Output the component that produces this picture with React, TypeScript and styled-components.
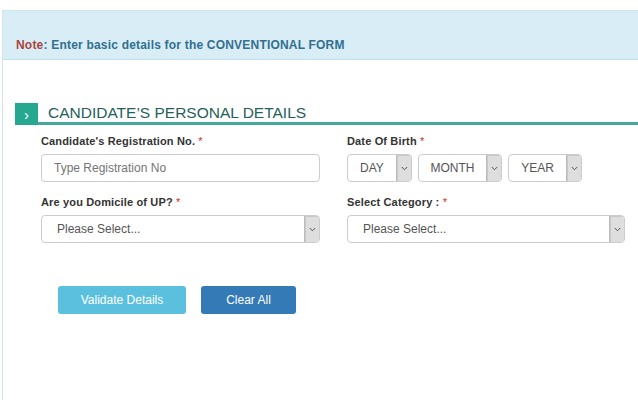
import React from "react";
import styled, { createGlobalStyle } from "styled-components";

const GlobalStyle = createGlobalStyle`
    body{
        margin:0;
        background:#fff;
        font-family:"Liberation Sans", Arial, sans-serif;
    }
`;

const Page = styled.div`
    padding:10px 0 0 2px;
`;

const Frame = styled.div`
    border-left:1px solid #d3e3ec;
    border-top:1px solid #cfe4ef;
    min-height:389px;
`;

const Alert = styled.div`
    background:#d9edf7;
    border-bottom:1px solid #bfe1ec;
    height:49px;
    box-sizing:border-box;
    padding:0 0 7px 13px;
    display:flex;
    align-items:flex-end;
    font-size:12px;
    font-weight:bold;
    letter-spacing:0.2px;
    color:#31708f;
    span{
        color:#a94442;
    }
`;

const Section = styled.div`
    margin-top:43px;
    padding-left:12px;
`;

const HeadingRow = styled.div`
    display:flex;
    align-items:stretch;
    height:22px;
`;

const HeadingBadge = styled.div`
    width:23px;
    background:#26a890;
    color:#fff;
    display:flex;
    align-items:center;
    justify-content:center;
    font-size:15px;
`;

const HeadingTitle = styled.div`
    flex:1;
    border-bottom:3px solid #44a79c;
    padding-left:10px;
    font-size:15.5px;
    color:#255f5c;
    line-height:20px;
`;

const FormGrid = styled.div`
    margin:10px 0 0 26px;
    display:grid;
    grid-template-columns:279px 278px;
    column-gap:27px;
    row-gap:14px;
`;

const Field = styled.div`
    display:flex;
    flex-direction:column;
`;

const Label = styled.label`
    font-size:11px;
    font-weight:bold;
    letter-spacing:0.15px;
    color:#333;
    line-height:13px;
    margin-bottom:6px;
    span{
        color:#c9302c;
        font-weight:normal;
    }
`;

const TextInput = styled.input`
    height:28px;
    box-sizing:border-box;
    border:1px solid #ccc;
    border-radius:4px;
    padding:0 12px;
    font-family:inherit;
    font-size:12px;
    color:#555;
    outline:none;
    ::placeholder{
        color:#a0a0a0;
    }
`;

const SelectBox = styled.div<{ $w?: number }>`
    display:flex;
    height:28px;
    box-sizing:border-box;
    width:${p => (p.$w ? `${p.$w}px` : "auto")};
    border:1px solid #ccc;
    border-radius:4px;
    background:#fff;
    overflow:hidden;
`;

const SelectText = styled.div<{ $center?: boolean }>`
    flex:1;
    display:flex;
    align-items:center;
    justify-content:${p => (p.$center ? "center" : "flex-start")};
    padding-left:${p => (p.$center ? "0" : "15px")};
    font-size:12px;
    color:#555;
`;

const Arrow = styled.div`
    width:14px;
    background:#dedede;
    border-left:1px solid #bdbdbd;
    box-shadow:1px 1px 0 #c8c8c8 inset;
    display:flex;
    align-items:center;
    justify-content:center;
`;

const DobRow = styled.div`
    display:flex;
    gap:6px;
`;

const Buttons = styled.div`
    display:flex;
    gap:15px;
    margin:43px 0 0 43px;
`;

const Button = styled.button<{ $bg: string; $w: number }>`
    height:28px;
    padding:0;
    width:${p => p.$w}px;
    border:none;
    border-radius:3px;
    background:${p => p.$bg};
    color:#fff;
    font-family:inherit;
    font-size:12px;
`;

function Chevron(){
    return <svg width="7" height="5" viewBox="0 0 7 5">
        <path d="M0.8 1 L3.5 3.8 L6.2 1" fill="none" stroke="#555" strokeWidth="1"/>
    </svg>
}

function Select({ text, width, center }: { text: string; width?: number; center?: boolean }){
    return <SelectBox $w={width}>
        <SelectText $center={center}>{text}</SelectText>
        <Arrow><Chevron/></Arrow>
    </SelectBox>
}

export default function App(){
    return <>
        <GlobalStyle/>
        <Page>
            <Frame>
                <Alert><span>Note</span>: Enter basic details for the CONVENTIONAL FORM</Alert>
                <Section>
                    <HeadingRow>
                        <HeadingBadge>›</HeadingBadge>
                        <HeadingTitle>CANDIDATE’S PERSONAL DETAILS</HeadingTitle>
                    </HeadingRow>
                    <FormGrid>
                        <Field>
                            <Label>Candidate's Registration No. <span>*</span></Label>
                            <TextInput placeholder="Type Registration No"/>
                        </Field>
                        <Field>
                            <Label>Date Of Birth <span>*</span></Label>
                            <DobRow>
                                <Select text="DAY" width={65} center/>
                                <Select text="MONTH" width={84} center/>
                                <Select text="YEAR" width={74} center/>
                            </DobRow>
                        </Field>
                        <Field>
                            <Label>Are you Domicile of UP? <span>*</span></Label>
                            <Select text="Please Select..."/>
                        </Field>
                        <Field>
                            <Label>Select Category : <span>*</span></Label>
                            <Select text="Please Select..."/>
                        </Field>
                    </FormGrid>
                    <Buttons>
                        <Button $bg="#5bc0de" $w={128}>Validate Details</Button>
                        <Button $bg="#337ab7" $w={95}>Clear All</Button>
                    </Buttons>
                </Section>
            </Frame>
        </Page>
    </>
}
